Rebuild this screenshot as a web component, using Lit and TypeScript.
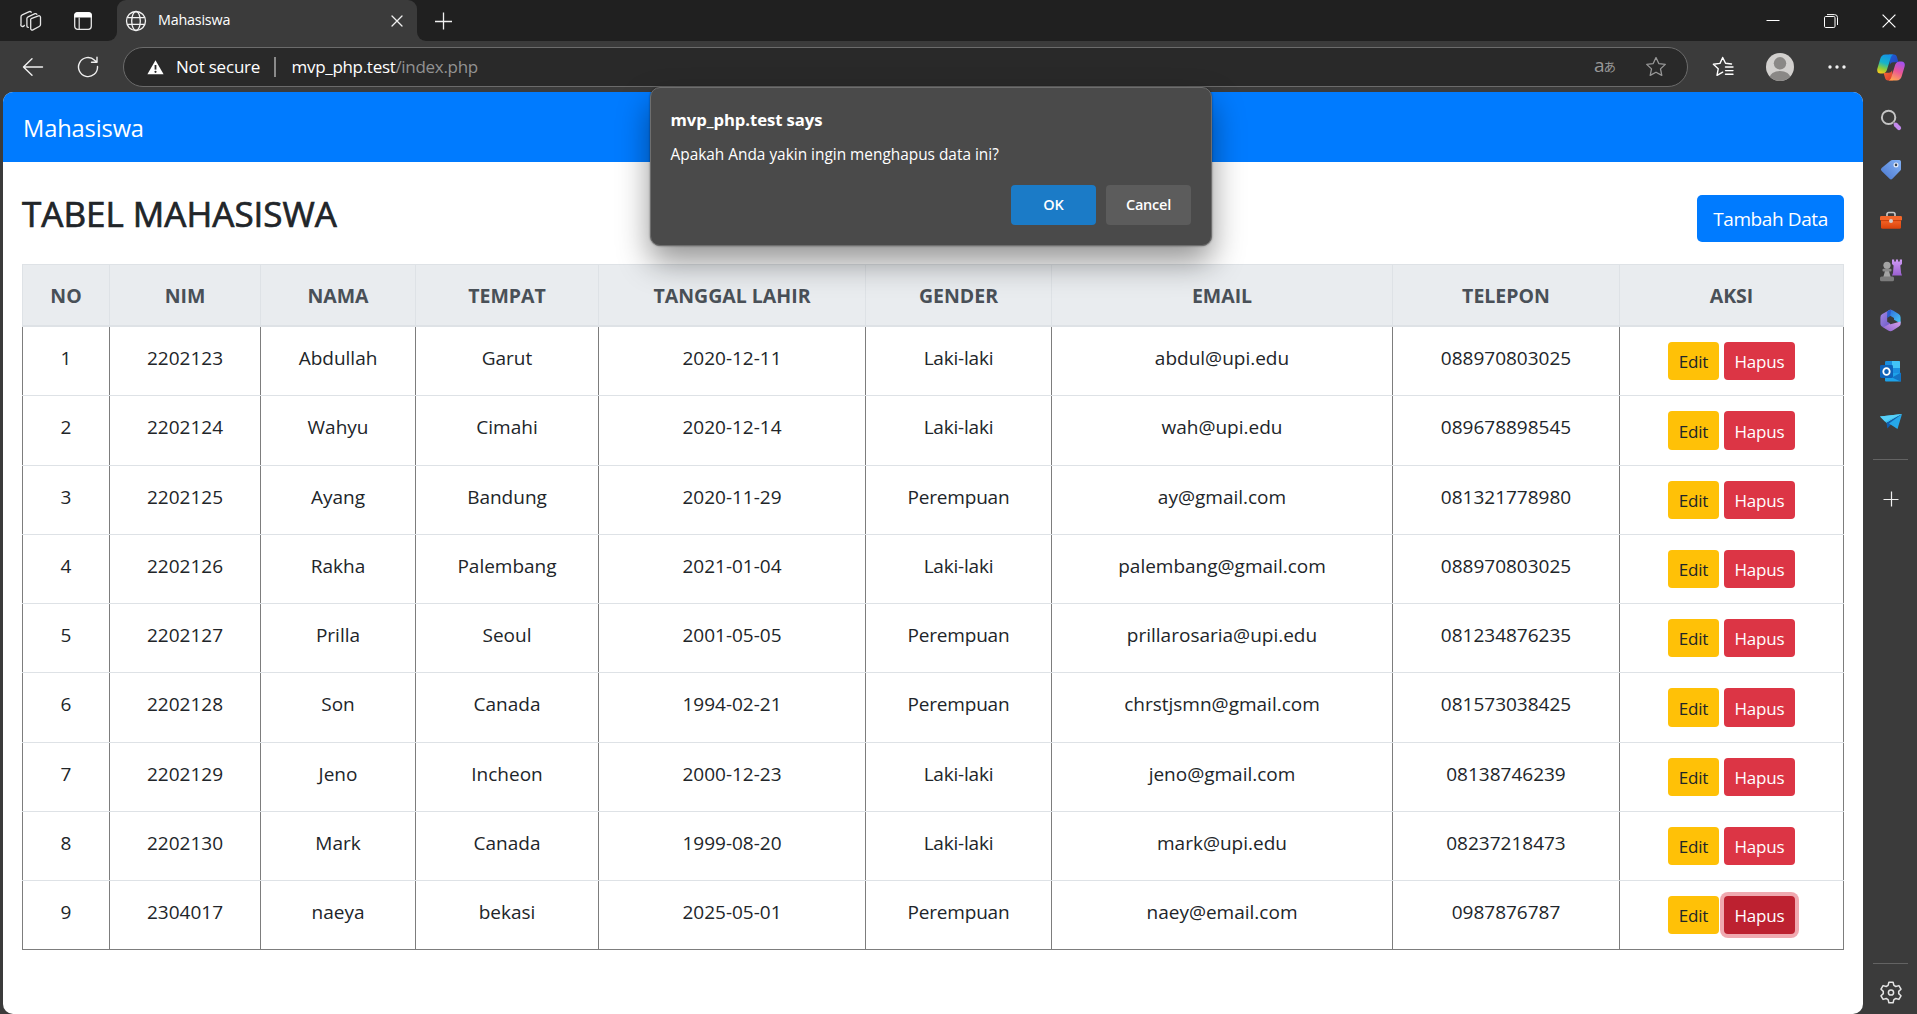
import { LitElement, html, css, nothing } from "lit";
import { customElement, state } from "lit/decorators.js";
import { classMap } from "lit/directives/class-map.js";

interface Student {
  nim: string;
  nama: string;
  tempat: string;
  lahir: string;
  gender: string;
  email: string;
  telepon: string;
}

const row = (nim: string, nama: string, tempat: string, lahir: string, gender: string, email: string, telepon: string): Student =>
  ({ nim, nama, tempat, lahir, gender, email, telepon });

const STUDENTS: Student[] = [
  row("2202123", "Abdullah", "Garut", "2020-12-11", "Laki-laki", "abdul@upi.edu", "088970803025"),
  row("2202124", "Wahyu", "Cimahi", "2020-12-14", "Laki-laki", "wah@upi.edu", "089678898545"),
  row("2202125", "Ayang", "Bandung", "2020-11-29", "Perempuan", "ay@gmail.com", "081321778980"),
  row("2202126", "Rakha", "Palembang", "2021-01-04", "Laki-laki", "palembang@gmail.com", "088970803025"),
  row("2202127", "Prilla", "Seoul", "2001-05-05", "Perempuan", "prillarosaria@upi.edu", "081234876235"),
  row("2202128", "Son", "Canada", "1994-02-21", "Perempuan", "chrstjsmn@gmail.com", "081573038425"),
  row("2202129", "Jeno", "Incheon", "2000-12-23", "Laki-laki", "jeno@gmail.com", "08138746239"),
  row("2202130", "Mark", "Canada", "1999-08-20", "Laki-laki", "mark@upi.edu", "08237218473"),
  row("2304017", "naeya", "bekasi", "2025-05-01", "Perempuan", "naey@email.com", "0987876787"),
];

const HEADERS = ["NO", "NIM", "NAMA", "TEMPAT", "TANGGAL LAHIR", "GENDER", "EMAIL", "TELEPON", "AKSI"];

const FONT = css`"Segoe UI", "Open Sans", "Noto Sans", sans-serif`;

/* ---------- icons ---------- */
const workspaces = html`<svg width="24" height="24" viewBox="0 0 24 24" fill="none" stroke="#e6e6e6" stroke-width="1.3" stroke-linejoin="round" stroke-linecap="round">
  <path d="M12.2 9.6 19.4 6.900a1.5 1.5 0 0 1 2.1 1.3v7.4a2 2 0 0 1-1.3 1.9l-6.3 3.400a1.5 1.5 0 0 1-2.2-1.2v-8a2 2 0 0 1 .5-2.1z"/>
  <path d="M9.300 18.400a1.5 1.5 0 0 1-1.400-1.5V9.600a2 2 0 0 1 1.200-1.800L16 4.700a1.600 1.600 0 0 1 1.900.6"/>
  <path d="M5.400 16.300A1.5 1.5 0 0 1 2 15V7.700a2 2 0 0 1 1.200-1.800L10.300 2.600a1.600 1.600 0 0 1 1.900.6"/>
</svg>`;
const tabActions = html`<svg width="20" height="20" viewBox="0 0 20 20"><rect x="1.700" y="1.700" width="16.600" height="16.600" rx="3" fill="none" stroke="#e6e6e6" stroke-width="1.300"/><path d="M1.200 6.500V4.500A3.300 3.300 0 0 1 4.500 1.200h11a3.300 3.300 0 0 1 3.300 3.300v2z" fill="#fff"/><path d="M6.200 6.500v11.500" stroke="#e6e6e6" stroke-width="1.200"/></svg>`;
const globe = html`<svg width="22" height="22" viewBox="0 0 22 22" fill="none" stroke="#f2f2f2" stroke-width="1.300"><circle cx="11" cy="11" r="9.500"/><ellipse cx="11" cy="11" rx="4.300" ry="9.500"/><path d="M2.200 7.600h17.600M2.200 14.400h17.600"/></svg>`;
const closeSmall = html`<svg width="12" height="12" viewBox="0 0 12 12" stroke="#f0f0f0" stroke-width="1.300" stroke-linecap="round"><path d="m1 1 10 10M11 1 1 11"/></svg>`;
const plus = html`<svg width="18" height="18" viewBox="0 0 18 18" stroke="#f0f0f0" stroke-width="1.300"><path d="M8.500 .5v17M0 9.500h17"/></svg>`;
const plusSmall = html`<svg width="16" height="16" viewBox="0 0 16 16" stroke="#f0f0f0" stroke-width="1.200"><path d="M8.500 .5v15M.5 8.500h15"/></svg>`;
const minimize = html`<svg width="14" height="14" viewBox="0 0 14 14"><path d="M.5 6.500h13" stroke="#fff"/></svg>`;
const restore = html`<svg width="14" height="14" viewBox="0 0 14 14" fill="none" stroke="#fff"><rect x=".5" y="2.500" width="10.500" height="11" rx="1.200"/><path d="M3 .6h7.500a3 3 0 0 1 3 3V11"/></svg>`;
const closeWin = html`<svg width="14" height="14" viewBox="0 0 14 14" stroke="#fff" stroke-width="1.200"><path d="m.6.600 12.800 12.800M13.400.6.600 13.400"/></svg>`;
const back = html`<svg width="22" height="20" viewBox="0 0 22 20" fill="none" stroke="#f0f0f0" stroke-width="1.400" stroke-linecap="round" stroke-linejoin="round"><path d="M10 1.700 1.500 10l8.500 8.300M1.700 10H20.500"/></svg>`;
const refresh = html`<svg width="22" height="22" viewBox="0 0 22 22" fill="none" stroke="#f0f0f0" stroke-width="1.400" stroke-linecap="round" stroke-linejoin="round"><path d="M20.500 10.500A9.500 9.500 0 1 1 17.600 4.200L19.700 6M20 1.200V6.300H14.500"/></svg>`;
const warning = html`<svg width="17" height="15" viewBox="0 0 17 15"><path d="M8.500.3 16.600 14.200H.4z" fill="#fff"/><path d="M8.500 5v4.600" stroke="#292929" stroke-width="1.800"/><circle cx="8.500" cy="11.800" r="1.100" fill="#292929"/></svg>`;
const star = html`<svg width="22" height="22" viewBox="0 0 22 22" fill="none" stroke="#979797" stroke-width="1.300" stroke-linejoin="round"><path d="m11 1.600 2.800 6 6.500.8-4.800 4.500 1.300 6.500L11 16.200l-5.800 3.200 1.300-6.500L1.700 8.400l6.500-.8z"/></svg>`;
const favorites = html`<svg width="22" height="22" viewBox="0 0 22 22" fill="none" stroke="#fff" stroke-width="1.400" stroke-linejoin="round" stroke-linecap="round"><path d="M19.500 8 13.500 7.300 10.700 1.500 8 7.400 1.400 8.300 6.200 12.800 5 19.400l5.700-3.200"/><path d="M13.500 11h7.500M13.500 14.600h7.500M13.500 18.200h7.500"/></svg>`;
const avatar = html`<svg width="28" height="28" viewBox="0 0 28 28"><clipPath id="av"><circle cx="14" cy="14" r="14"/></clipPath><circle cx="14" cy="14" r="14" fill="#d2d0ce"/><g clip-path="url(#av)" fill="#8a8886"><circle cx="14" cy="10.300" r="6.200"/><ellipse cx="14" cy="25" rx="10.500" ry="7"/></g></svg>`;
const dots = html`<svg class="dots" width="18" height="4" viewBox="0 0 18 4" fill="#f2f2f2"><circle cx="2" cy="2" r="1.700"/><circle cx="9" cy="2" r="1.700"/><circle cx="16" cy="2" r="1.700"/></svg>`;
const copilot = html`<svg width="28" height="27" viewBox="0 0 28 27">
  <defs>
    <linearGradient id="cb" x1=".6" y1="0" x2=".3" y2="1"><stop offset="0" stop-color="#1594e8"/><stop offset=".45" stop-color="#16b3c9"/><stop offset=".75" stop-color="#8ccb3c"/><stop offset="1" stop-color="#f5cc1c"/></linearGradient>
    <linearGradient id="cp" x1=".7" y1="0" x2=".3" y2="1"><stop offset="0" stop-color="#a451f0"/><stop offset=".5" stop-color="#ea5696"/><stop offset="1" stop-color="#ffa552"/></linearGradient>
    <linearGradient id="cd" x1="0" y1="0" x2="1" y2="1"><stop offset="0" stop-color="#1d5fd8"/><stop offset="1" stop-color="#2643b8"/></linearGradient>
    <linearGradient id="co" x1="0" y1="0" x2="1" y2="1"><stop offset="0" stop-color="#f86a3a"/><stop offset="1" stop-color="#d83b2c"/></linearGradient>
  </defs>
  <path d="M12 .5h5c1.700 0 2.500 1 3 2.700l1.500 5h-5.300c-2 0-2.800 1.200-3.300 2.800z" fill="url(#cd)"/>
  <path d="M16 26.500h-5c-1.700 0-2.500-1-3-2.700l-1.500-5h5.300c2 0 2.800-1.200 3.300-2.800z" fill="url(#co)"/>
  <path d="M8.500.5h8c-1.600.4-2.300 1.700-2.800 3.300L10.200 15c-.7 2.300-1.700 4.500-4.500 4.500H3.500C.7 19.500-.3 17.200.4 14.600L3.300 4.800C4 2.300 5.600.5 8.500.5z" fill="url(#cb)"/>
  <path d="M19.500 26.500h-8c1.600-.4 2.300-1.700 2.800-3.300L17.800 12c.7-2.300 1.700-4.500 4.500-4.500h2.200c2.800 0 3.800 2.300 3.100 4.900l-2.900 9.800c-.7 2.500-2.300 4.300-5.200 4.300z" fill="url(#cp)"/>
</svg>`;
const search = html`<svg width="22" height="22" viewBox="0 0 22 22" fill="none"><circle cx="8.600" cy="8.400" r="6.700" stroke="#c4c4c4" stroke-width="2"/><path d="m13.200 13 2 2" stroke="#8c8c8c" stroke-width="1.600"/><path d="m15.800 15.800 3.200 3.200" stroke="#c48aee" stroke-width="4.200" stroke-linecap="round"/></svg>`;
const tag = html`<svg width="22" height="22" viewBox="0 0 22 22"><defs><linearGradient id="tg" x1="1" y1="0" x2="0" y2="1"><stop offset="0" stop-color="#82b1f5"/><stop offset="1" stop-color="#4b78cf"/></linearGradient></defs><path d="M12.300 1h7A1.800 1.800 0 0 1 21 2.800v7.400c0 .6-.2 1-.6 1.400l-8 8.100a2 2 0 0 1-2.800 0l-8-7.800a2 2 0 0 1 0-2.900l8.900-7.300c.5-.4 1-.7 1.800-.7z" fill="url(#tg)"/><circle cx="16" cy="5.900" r="1.900" fill="#3c4450" stroke="#e8eefb" stroke-width="1.200"/></svg>`;
const toolbox = html`<svg width="22" height="18" viewBox="0 0 22 18"><defs><linearGradient id="tb" x1="0" y1="0" x2="0" y2="1"><stop offset="0" stop-color="#f8692b"/><stop offset="1" stop-color="#d9420b"/></linearGradient></defs><path d="M7 6V3.200A1.700 1.700 0 0 1 8.700 1.500h4.600A1.700 1.700 0 0 1 15 3.200V6" fill="none" stroke="#c6c6c6" stroke-width="1.700"/><rect x="1" y="8" width="20" height="9.700" rx="1.500" fill="url(#tb)"/><rect x="0" y="5" width="22" height="4.500" rx="1.200" fill="#f4662a"/><path d="M1 9.600h20" stroke="#b93404" stroke-width=".8"/><circle cx="11" cy="10" r="2" fill="#d0d0d0"/></svg>`;
const chess = html`<svg width="22" height="23" viewBox="0 0 22 23"><defs><linearGradient id="rk" x1="0" y1="0" x2="0" y2="1"><stop offset="0" stop-color="#cf9bf5"/><stop offset="1" stop-color="#9a5fcf"/></linearGradient></defs><path d="M12 .5h2.200v2h1.700v-2h2.200v2h1.700v-2H22V5l-1.700 1.500.8 7.500.9 2.500H12l1-2.500.6-7.500L12 5z" fill="url(#rk)"/><g fill="#a3a3a3"><circle cx="7" cy="6.300" r="3.600"/><path d="M5 12h4l1.700 6h-7.400z"/></g><rect x="2.500" y="9.800" width="9" height="2.800" rx="1" fill="#8a8a8a"/><rect x="0" y="17.500" width="14" height="4.800" rx="1.500" fill="#7c7c7c"/></svg>`;
const m365 = html`<svg width="21" height="23" viewBox="0 0 21 23"><defs>
  <linearGradient id="ma" x1="0" y1="0" x2="1" y2="1"><stop offset="0" stop-color="#2d63d8"/><stop offset="1" stop-color="#49cdf6"/></linearGradient>
  <linearGradient id="mb" x1="0" y1="0" x2="1" y2="1"><stop offset="0" stop-color="#a58ae4"/><stop offset="1" stop-color="#6a56c8"/></linearGradient>
  <linearGradient id="mc" x1="0" y1="1" x2="1" y2="0"><stop offset="0" stop-color="#8a62cf"/><stop offset="1" stop-color="#d7a0ea"/></linearGradient></defs>
  <path d="M8.500 1.500c1.500-1 3-.9 4.500 0l5.700 3.600a3.800 3.800 0 0 1 1.900 3.300v6.100L14 10.700V9L7.200 5z" fill="url(#ma)"/>
  <path d="M20.600 12.500v2.500c0 1-.7 1.900-2 2.700L12.700 21.600c-1.500.9-3 .9-4.500 0L2.500 18l5-4 3 1.300z" fill="url(#mc)"/>
  <path d="M10 .8 2.300 5A3.800 3.800 0 0 0 .4 8.300v6.500c0 3 3 3.800 5 2.500l5-2.800-3.200-1.800V7.200L11.500 1z" fill="url(#mb)"/>
  <path d="M10 .8 7.200 2.400V9l3-2 .9-5.900z" fill="#2b5fd0"/></svg>`;
const outlook = html`<svg width="21" height="21" viewBox="0 0 21 21"><rect x="5" y="0" width="15" height="14" rx="1.200" fill="#1a8fe0"/><path d="M12 0h7a1 1 0 0 1 1 1v6h-8z" fill="#42c3f7"/><path d="M5 12h16v7.500a1 1 0 0 1-1 1H6a1 1 0 0 1-1-1z" fill="#1da3ea"/><path d="m21 11.500-9 5 8.500 4h.5z" fill="#1273c4"/><rect x="0" y="4" width="13" height="13" rx="1.400" fill="#0f62b8"/><ellipse cx="6.500" cy="10.500" rx="3.200" ry="3.400" fill="none" stroke="#fff" stroke-width="1.800"/></svg>`;
const plane = html`<svg width="22" height="17" viewBox="0 0 22 17"><path d="M0 3.500 22 1 6.500 10z" fill="#3cc2f4"/><path d="m6.500 10 .9 5.500L10.500 12 22 1z" fill="#0f5fb0"/><path d="M22 1 9 10.500l8.500 5.500z" fill="#26a7e8"/><path d="M0 3.500 22 1 5 8.500z" fill="#57d0f8"/></svg>`;
const gear = html`<svg width="22" height="23" viewBox="0 0 22 23" fill="none" stroke="#e4e4e4" stroke-width="1.500" stroke-linejoin="round"><path d="M8.900 1.300h4.200l.8 3.100 1.900 1.100 3.100-.9 2.100 3.600-2.300 2.200v2.200l2.300 2.200-2.100 3.600-3.100-.9-1.900 1.100-.8 3.100H8.900l-.8-3.100-1.900-1.100-3.100.9L1 14.800l2.300-2.200v-2.200L1 8.200l2.100-3.600 3.100.9 1.900-1.100z"/><circle cx="11" cy="11.500" r="2.600"/></svg>`;

@customElement("browser-chrome")
export class BrowserChrome extends LitElement {
  static styles = css`
    :host { display: block; font-family: ${FONT}; color: #fff; }
    svg { display: block; flex: none; }
    .tabs { height: 41px; background: #202020; display: flex; }
    .lead { width: 117px; display: flex; align-items: center; padding-left: 19px; gap: 30px; box-sizing: border-box; background: #202020; border-bottom-right-radius: 9px; }
    .under { background: #3b3b3b; display: flex; }
    .rest { flex: 1; }
    .tab { width: 300px; background: #3b3b3b; border-radius: 9px 9px 0 0; display: flex; align-items: center; padding: 0 14px 0 8px; box-sizing: border-box; }
    .corner { background: #202020; display: flex; }
    .title { flex: 1; margin-left: 11px; font-size: 14.300px; letter-spacing: -.18px; line-height: 20px; margin-top: -1px; }
    .trail { flex: 1; background: #202020; border-bottom-left-radius: 9px; display: flex; align-items: center; padding: 0 21px 0 18px; }
    .controls { margin-left: auto; display: flex; gap: 44px; align-items: center; }
    .bar { height: 51px; background: #3b3b3b; display: flex; align-items: center; padding: 1px 12px 0 22px; box-sizing: border-box; }
    .bar .reload { margin: 0 24px 0 33px; }
    .pill { flex: none; width: 1565px; height: 40px; box-sizing: border-box; border: 1px solid #6b6b6b; border-radius: 20px; background: #292929; display: flex; align-items: center; padding: 0 20px 0 23px; }
    .addr { font-size: 17px; line-height: 24px; white-space: pre; }
    .secure { margin-left: 12px; width: 98px; letter-spacing: -.2px; }
    .sep { width: 1.500px; height: 20px; background: #8a8a8a; }
    .url { margin-left: 16px; flex: 1; letter-spacing: -.3px; }
    .path { color: #929292; }
    .translate { color: #979797; display: flex; align-items: baseline; font-size: 19px; margin-right: 29px; line-height: 20px; margin-top: -3px; }
    .translate small { font: 12.500px "Noto Sans CJK JP", sans-serif; margin-left: -1px; }
    .right { flex: 1; display: flex; align-items: center; justify-content: space-between; margin-left: 24px; }
    .dots { margin: 0 -1px 0 1px; }
  `;

  render() {
    return html`
      <div class="tabs">
        <div class="under"><div class="lead">${workspaces}${tabActions}</div></div>
        <div class="corner"><div class="tab">${globe}<span class="title">Mahasiswa</span>${closeSmall}</div></div>
        <div class="under rest"><div class="trail">${plus}<div class="controls">${minimize}${restore}${closeWin}</div></div></div>
      </div>
      <div class="bar">
        ${back}<div class="reload">${refresh}</div>
        <div class="pill">
          ${warning}<span class="addr secure">Not secure</span><span class="sep"></span>
          <span class="addr url">mvp_php.test<span class="path">/index.php</span></span>
          <span class="translate">a<small>あ</small></span>${star}
        </div>
        <div class="right">${favorites}${avatar}${dots}${copilot}</div>
      </div>`;
  }
}

@customElement("side-bar")
export class SideBar extends LitElement {
  static styles = css`
    :host { display: flex; flex-direction: column; width: 54px; background: #3b3b3b; align-items: center; padding: 3px 0 10px 1px; box-sizing: border-box; }
    svg { display: block; }
    .item { height: 50.200px; display: flex; align-items: center; justify-content: center; }
    .line { width: 35px; height: 1px; background: #636363; flex: none; }
    .first { margin-top: 13px; }
    .add { margin: 31px 0 auto; }
    .gear { margin-top: 17px; }
  `;
  render() {
    return html`
      ${[search, tag, toolbox, chess, m365, outlook, plane].map((i) => html`<div class="item">${i}</div>`)}
      <div class="line first"></div>
      <div class="add">${plusSmall}</div>
      <div class="line"></div>
      <div class="gear">${gear}</div>`;
  }
}

@customElement("student-table")
export class StudentTable extends LitElement {
  static styles = css`
    :host { display: block; font-family: ${FONT}; color: #212529; font-size: 19px; }
    .row { display: grid; grid-template-columns: 88px 151px 155px 183px 267px 186px 341px 227px 224px; box-sizing: border-box; height: 69px; border-bottom: 1px solid #dee2e6; }
    .row.tall { height: 70px; }
    .row:last-child { border-bottom-color: #7d7d7d; }
    .cell { border-right: 1px solid #7d7d7d; text-align: center; line-height: 30px; padding-top: 16px; box-sizing: border-box; white-space: nowrap; }
    .cell:first-child { border-left: 1px solid #7d7d7d; }
    .gender { letter-spacing: -.2px; }
    .head { height: 63px; border-top: 1px solid #dee2e6; border-bottom: 2px solid #dee2e6; background: #e9ecef; color: #495057; font-weight: 700; font-size: 19.500px; }
    .head .cell { border-color: #dee2e6; }
    .actions { display: flex; justify-content: center; align-items: flex-start; gap: 5px; padding: 15px 0 0; }
    .btn { font: inherit; font-size: 17px; line-height: 26px; height: 38px; border: 0; border-radius: 4px; padding: 2px 0 0; box-sizing: border-box; letter-spacing: -.2px; }
    .tall .btn { height: 39px; }
    .edit { width: 51px; background: #ffc107; color: #212529; }
    .hapus { width: 71px; background: #dc3545; color: #fff; }
    .hapus.focus { background: #bd2130; box-shadow: 0 0 0 4px rgba(225, 83, 97, .5); }
  `;
  render() {
    return html`
      <div class="row head">${HEADERS.map((h) => html`<div class="cell">${h}</div>`)}</div>
      ${STUDENTS.map((s, i) => html`
        <div class=${classMap({ row: true, tall: i === 1 || i === 5 })}>
          <div class="cell">${i + 1}</div>
          <div class="cell">${s.nim}</div>
          <div class="cell">${s.nama}</div>
          <div class="cell">${s.tempat}</div>
          <div class="cell">${s.lahir}</div>
          <div class="cell gender">${s.gender}</div>
          <div class="cell">${s.email}</div>
          <div class="cell">${s.telepon}</div>
          <div class="cell actions">
            <button class="btn edit">Edit</button>
            <button class=${classMap({ btn: true, hapus: true, focus: i === STUDENTS.length - 1 })}>Hapus</button>
          </div>
        </div>`)}`;
  }
}

@customElement("confirm-dialog")
export class ConfirmDialog extends LitElement {
  static styles = css`
    :host { display: block; box-sizing: border-box; width: 562px; height: 159px; border-radius: 10px; background: #4a4a4a; border: 1px solid #6e6e6e; box-shadow: 0 0 2px rgba(0,0,0,.5), 0 16px 32px rgba(0,0,0,.42); font-family: ${FONT}; color: #fff; padding: 20px 20px 0 19.500px; }
    .title { font-size: 16.700px; font-weight: 700; line-height: 24px; letter-spacing: -.08px; }
    .text { font-size: 15.400px; line-height: 20px; margin-top: 13px; letter-spacing: 0; }
    .buttons { display: flex; justify-content: flex-end; gap: 10px; margin-top: 20px; }
    .btn { width: 85px; height: 40px; border: 0; border-radius: 4px; background: #5c5c5c; color: #fff; font: 600 14.500px/20px ${FONT}; letter-spacing: -.2px; padding: 0; }
    .ok { background: #1b7bc7; }
  `;
  render() {
    return html`
      <div class="title">mvp_php.test says</div>
      <div class="text">Apakah Anda yakin ingin menghapus data ini?</div>
      <div class="buttons"><button class="btn ok">OK</button><button class="btn">Cancel</button></div>`;
  }
}

@customElement("app-root")
export class AppRoot extends LitElement {
  @state() private confirming = true;

  static styles = css`
    :host { display: flex; flex-direction: column; height: 1014px; width: 1917px; position: relative; overflow: hidden; background: #3b3b3b; font-family: ${FONT}; }
    .body { flex: 1; display: flex; min-height: 0; }
    .page { width: 1860px; margin-left: 3px; background: #fff; border-radius: 10px; overflow: hidden; }
    .nav { height: 70px; box-sizing: border-box; background: #007bff; color: #fff; font-size: 23.700px; letter-spacing: -.15px; line-height: 32px; padding: 20px 0 0 20px; }
    .head { display: flex; justify-content: space-between; align-items: flex-start; padding: 33px 19px 22px; }
    .h { margin: -2px 0 0; font-weight: 400; -webkit-text-stroke: .7px #212529; font-size: 35px; line-height: 42px; color: #212529; }
    .add { width: 147px; height: 47px; border: 0; border-radius: 5px; background: #007bff; color: #fff; font: 19px/30px ${FONT}; letter-spacing: -.4px; padding: 0; }
    .table { margin: 0 19px; }
    side-bar { flex: none; }
    .dialog { position: absolute; left: 650px; top: 87px; }
  `;

  render() {
    return html`
      <browser-chrome></browser-chrome>
      <div class="body">
        <main class="page">
          <div class="nav">Mahasiswa</div>
          <div class="head"><h2 class="h">TABEL MAHASISWA</h2><button class="add">Tambah Data</button></div>
          <student-table class="table"></student-table>
        </main>
        <side-bar></side-bar>
      </div>
      ${this.confirming ? html`<confirm-dialog class="dialog"></confirm-dialog>` : nothing}`;
  }
}
